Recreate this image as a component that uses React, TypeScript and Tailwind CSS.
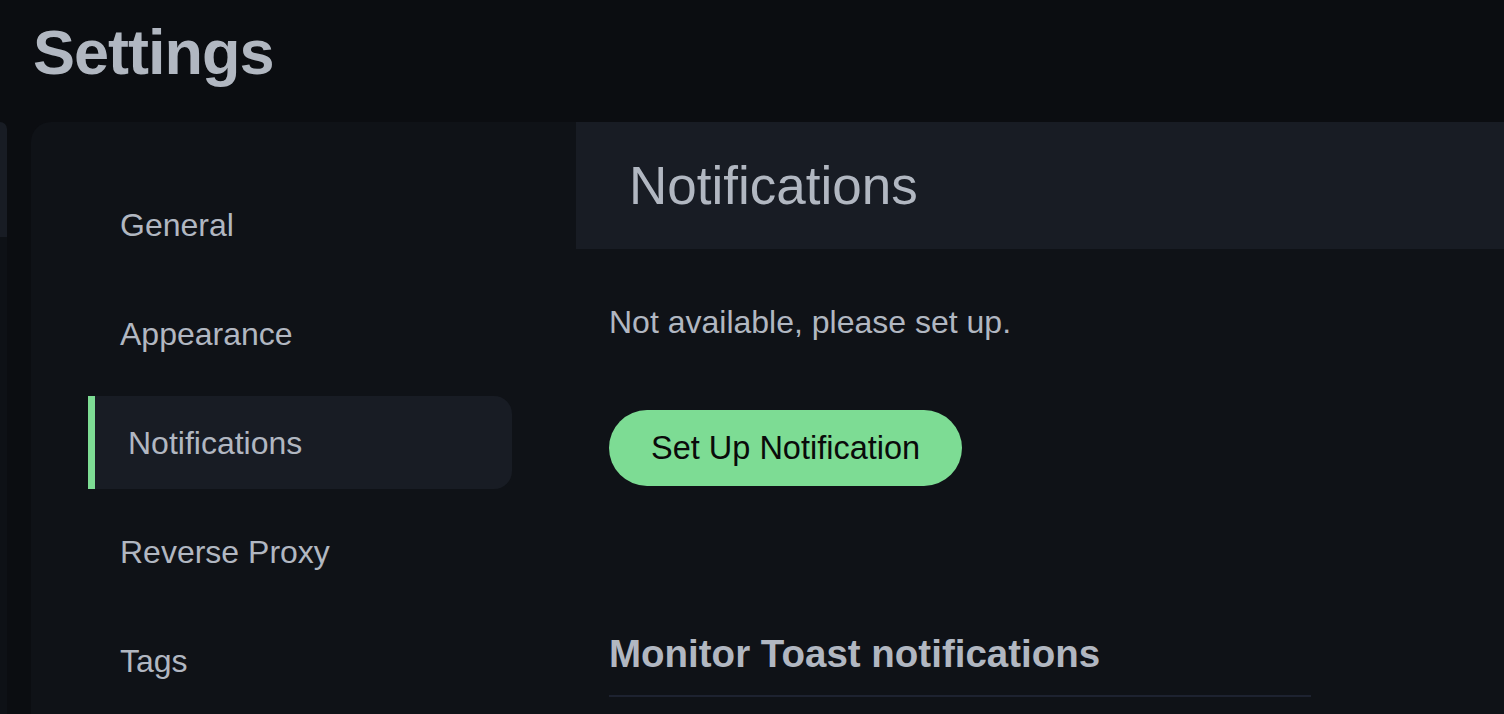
import * as React from "react";

const menu = ["General", "Appearance", "Notifications", "Reverse Proxy", "Tags"];

export default function App() {
  const active = "Notifications";

  return (
    <div
      className="h-[714px] overflow-hidden bg-[#0b0d11] text-[#b1b7c1]"
      style={{ fontFamily: '"Liberation Sans", Arial, sans-serif' }}
    >
      <h1 className="mt-[14px] mb-[32px] pl-[33px] text-[63px] leading-[76px] font-bold tracking-[-1px]">
        Settings
      </h1>

      <div className="flex h-[600px]">
        {/* edge of the panel behind */}
        <div className="flex w-[7px] flex-col overflow-hidden rounded-tr-[20px]">
          <div className="h-[115px] bg-[#181c24]" />
          <div className="flex-1 bg-[#0e1116]" />
        </div>

        {/* Settings card */}
        <div className="ml-[24px] flex flex-1 overflow-hidden rounded-tl-[20px] bg-[#0f1217]">
          <nav className="flex w-[545px] shrink-0 flex-col gap-[16px] pt-[56px]">
            {menu.map((item) =>
              item === active ? (
                <div
                  key={item}
                  className="ml-[57px] flex h-[93px] w-[424px] items-center rounded-r-[18px] border-l-[7px] border-[#7ddc94] bg-[#181c24] pl-[33px] text-[32px]"
                >
                  {item}
                </div>
              ) : (
                <div
                  key={item}
                  className="ml-[57px] flex h-[93px] w-[424px] items-center pl-[32px] text-[32px]"
                >
                  {item}
                </div>
              )
            )}
          </nav>

          <div className="flex flex-1 flex-col">
            <div className="flex h-[127px] items-center bg-[#181c24] pl-[53px] text-[53px]">
              Notifications
            </div>

            <div className="px-[33px] pt-[49px]">
              <p className="text-[32px] leading-[48px]">Not available, please set up.</p>

              <button className="mt-[64px] flex h-[76px] items-center rounded-full bg-[#7ddc94] px-[42px] text-[32.5px] text-[#0a0a0a]">
                Set Up Notification
              </button>

              <h5 className="mt-[145px] w-[702px] border-b-2 border-[#1d2230] pb-[18px] text-[38.5px] leading-[46px] font-bold">
                Monitor Toast notifications
              </h5>
            </div>
          </div>
        </div>
      </div>
    </div>
  );
}
